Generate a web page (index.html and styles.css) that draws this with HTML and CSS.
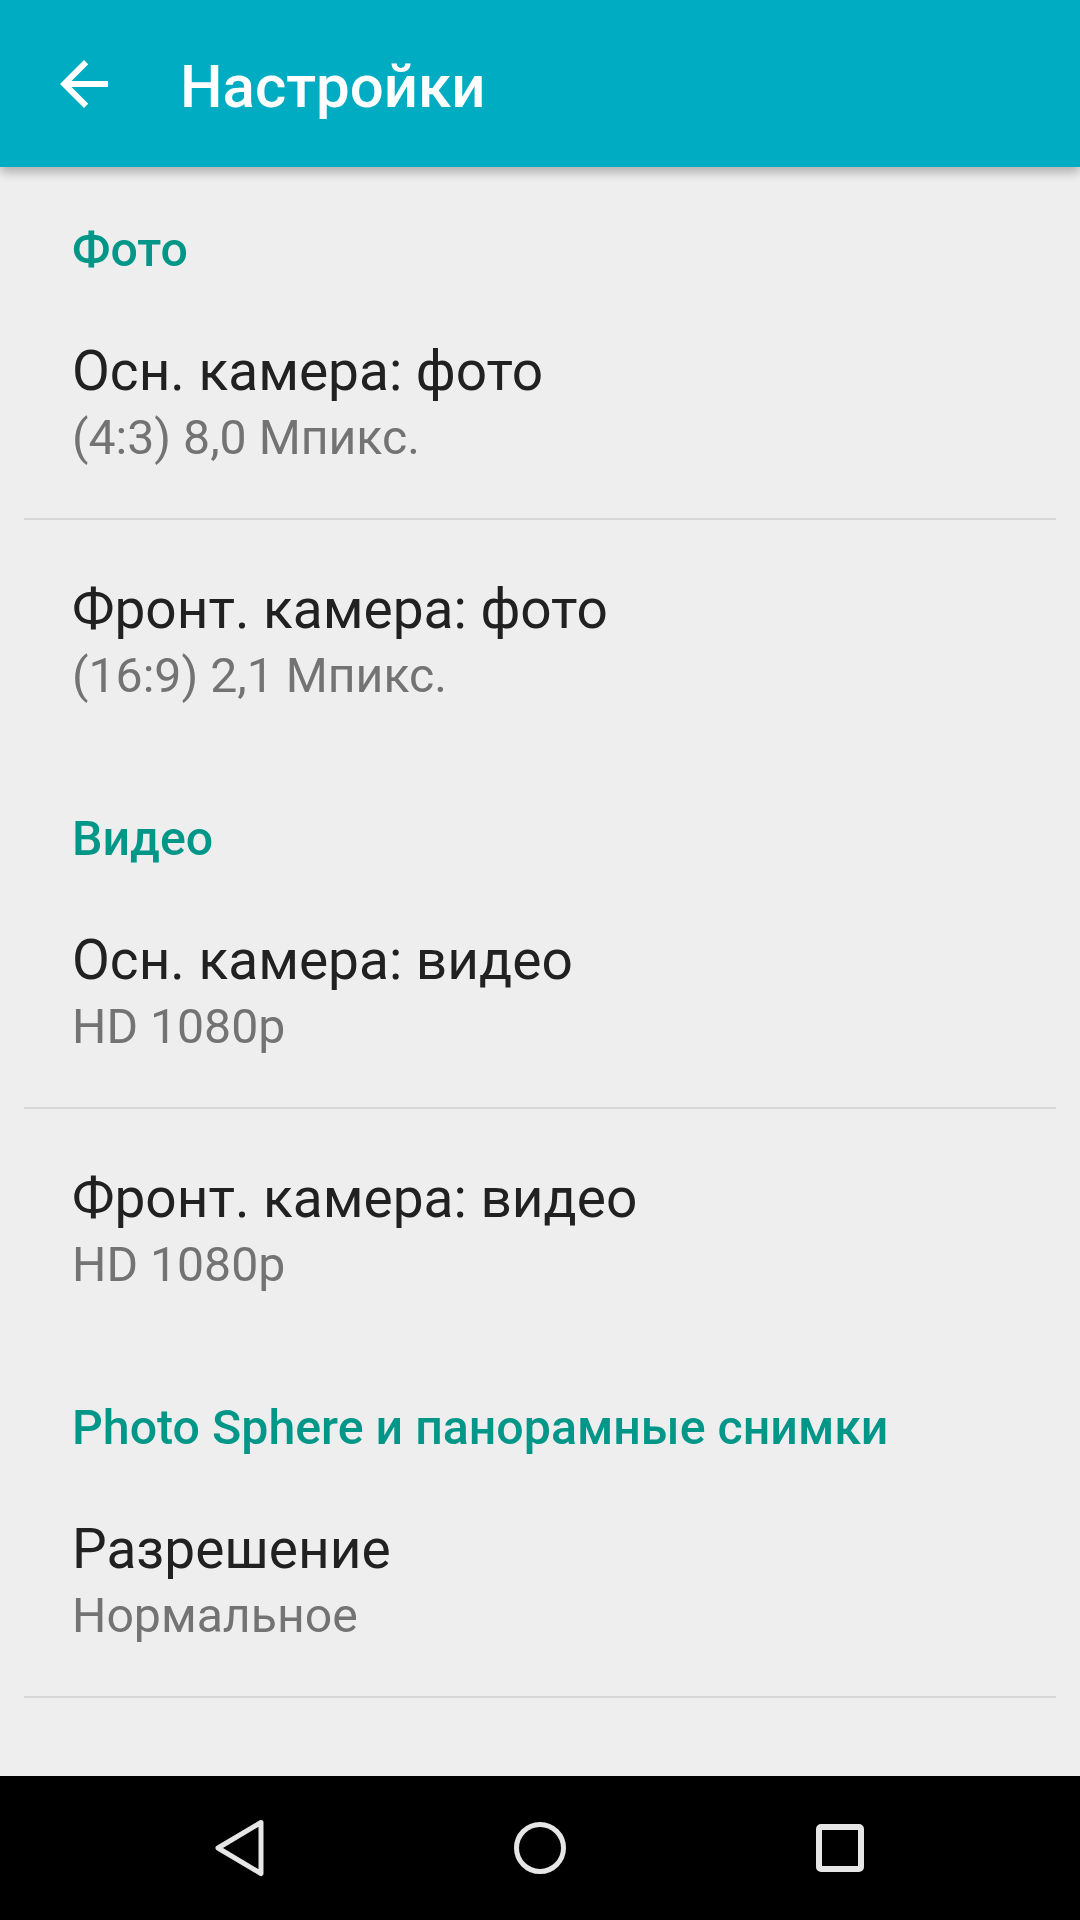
FILE: index.html
```html
<!DOCTYPE html>
<html lang="ru">
<head>
<meta charset="utf-8">
<title>Настройки</title>
<link rel="stylesheet" href="styles.css">
</head>
<body>
<div class="screen">
  <header class="appbar">
    <svg class="back" viewBox="0 0 24 24" width="72" height="72"><path d="M20 11H7.83l5.59-5.59L12 4l-8 8 8 8 1.41-1.41L7.83 13H20v-2z" fill="#fff"/></svg>
    <h1 class="appbar-title">Настройки</h1>
  </header>
  <main class="content">
    <div class="category">Фото</div>
    <div class="item">
      <div class="item-title">Осн. камера: фото</div>
      <div class="item-sub">(4:3) 8,0 Мпикс.</div>
    </div>
    <div class="divider"></div>
    <div class="item">
      <div class="item-title">Фронт. камера: фото</div>
      <div class="item-sub">(16:9) 2,1 Мпикс.</div>
    </div>
    <div class="category">Видео</div>
    <div class="item">
      <div class="item-title">Осн. камера: видео</div>
      <div class="item-sub">HD 1080p</div>
    </div>
    <div class="divider"></div>
    <div class="item">
      <div class="item-title">Фронт. камера: видео</div>
      <div class="item-sub">HD 1080p</div>
    </div>
    <div class="category">Photo Sphere и панорамные снимки</div>
    <div class="item">
      <div class="item-title">Разрешение</div>
      <div class="item-sub">Нормальное</div>
    </div>
    <div class="divider"></div>
  </main>
  <nav class="navbar">
    <div class="nav-btn">
      <svg viewBox="0 0 72 72" width="72" height="72"><path d="M57 10.5 L14 36 L57 61.5 Z" fill="none" stroke="#e6e6e6" stroke-width="5" stroke-linejoin="round"/></svg>
    </div>
    <div class="nav-btn">
      <svg viewBox="0 0 72 72" width="72" height="72"><circle cx="36" cy="36" r="23.5" fill="none" stroke="#e6e6e6" stroke-width="5"/></svg>
    </div>
    <div class="nav-btn">
      <svg viewBox="0 0 72 72" width="72" height="72"><rect x="15" y="15" width="42" height="42" rx="2" fill="none" stroke="#e6e6e6" stroke-width="6"/></svg>
    </div>
  </nav>
</div>
</body>
</html>
```
FILE: styles.css
```css
html, body {
  margin: 0;
  padding: 0;
  background: #eeeeee;
}
body {
  font-family: Roboto, "Noto Sans", sans-serif;
}
.screen {
  width: 1080px;
  height: 1920px;
  display: flex;
  flex-direction: column;
  overflow: hidden;
  background: #eeeeee;
}
.appbar {
  height: 167px;
  flex: 0 0 167px;
  background: #00acc1;
  display: flex;
  align-items: center;
  box-shadow: 0 5px 10px rgba(0, 0, 0, 0.28);
  position: relative;
  z-index: 2;
}
.back {
  margin-left: 48px;
  flex: 0 0 72px;
}
.appbar-title {
  margin: 6px 0 0 60px;
  font-size: 60px;
  font-weight: 500;
  line-height: 72px;
  color: #ffffff;
}
.content {
  flex: 1 1 auto;
}
.category {
  height: 115px;
  box-sizing: border-box;
  padding: 55px 0 0 72px;
  font-size: 48.3px;
  font-weight: 500;
  line-height: 56px;
  color: #009688;
}
.item {
  height: 236px;
  box-sizing: border-box;
  padding: 57px 0 0 72px;
}
.item-title {
  font-size: 55px;
  line-height: 64px;
  color: #212121;
}
.item-sub {
  margin-top: 3px;
  font-size: 48.2px;
  line-height: 64px;
  color: #737373;
}
.divider {
  height: 2px;
  margin: 0 24px;
  background: #d6d6d6;
}
.navbar {
  height: 144px;
  flex: 0 0 144px;
  background: #000000;
  display: flex;
  justify-content: center;
  align-items: center;
}
.nav-btn {
  width: 300px;
  display: flex;
  justify-content: center;
  align-items: center;
}
.nav-btn svg {
  display: block;
}
```
